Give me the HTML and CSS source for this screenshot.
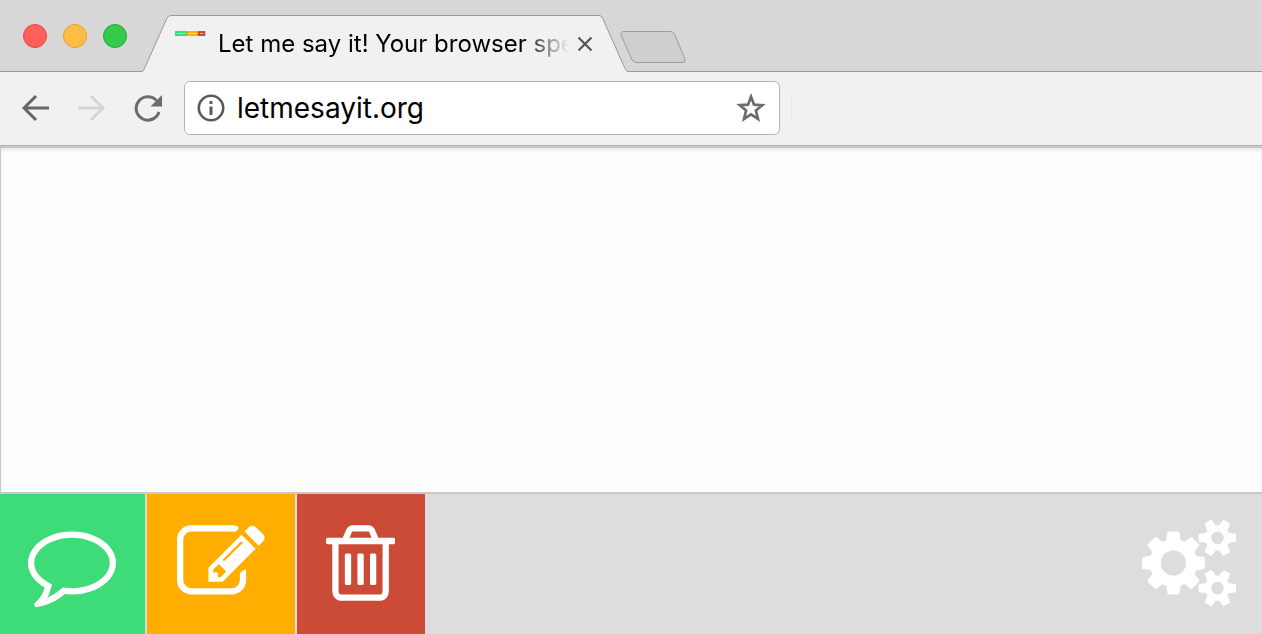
FILE: index.html
```html
<!DOCTYPE html>
<html lang="en">
<head>
<meta charset="utf-8">
<title>Let me say it!</title>
<link rel="stylesheet" href="styles.css">
</head>
<body>
<header class="tabstrip">
  <div class="lights">
    <button class="light red" type="button" aria-label="Close window"></button>
    <button class="light amber" type="button" aria-label="Minimize window"></button>
    <button class="light green" type="button" aria-label="Zoom window"></button>
  </div>
  <div class="tab">
    <svg class="tab-shape" viewBox="0 0 486 57" aria-hidden="true">
      <path d="M0 57L1.500 55.500L25 3Q26.500.500 29 .500H457Q459.500.500 460.500 3L484 55Q485 57 486 57Z" fill="#f1f1f1"/>
      <path d="M0 56.500Q1.500 56 2.500 53.500L25 3Q26.500.500 29 .500H457Q459.500.500 460.500 3L483 53.500Q484.500 56.500 486 56.500" fill="none" stroke="#989898"/>
    </svg>
    <svg class="favicon" viewBox="0 0 31 5" aria-hidden="true">
      <path fill="#3ddc78" d="M0 0h12v5H0z"/><path fill="#ffae00" d="M12 0h11v5H12z"/><path fill="#cc4b37" d="M23 0h7v5h-7z"/><path fill="#ccc" d="M30 0h1v5h-1z"/>
      <path stroke="#fff" stroke-opacity=".6" d="M2 2.500h8M14 2.500h7M25 2.500h3"/>
    </svg>
    <span class="tab-title">Let me say it! Your browser spe</span>
    <button class="tab-close" type="button" aria-label="Close tab">
      <svg viewBox="0 0 16 16"><path d="M1.500 1.500l13 13M14.500 1.500l-13 13" fill="none" stroke="#555" stroke-width="2.200"/></svg>
    </button>
  </div>
  <button class="new-tab" type="button" aria-label="New tab">
    <svg viewBox="0 0 66 32"><path d="M4 .500H50Q53 .500 54.500 3L65 28Q66 31.500 63 31.500H17Q13.500 31.500 12 29L1 4Q0 .500 4 .500Z" fill="#cfcfcf" stroke="#9b9b9b"/></svg>
  </button>
</header>
<nav class="toolbar">
  <button class="nav" type="button" aria-label="Back">
    <svg viewBox="0 0 28 28"><path d="M27 14H2M14 2L2 14l12 12" fill="none" stroke="#666" stroke-width="3"/></svg>
  </button>
  <button class="nav" type="button" aria-label="Forward" disabled>
    <svg viewBox="0 0 28 28"><path d="M0 14h25M13 2l12 12-12 12" fill="none" stroke="#d6d6d6" stroke-width="3"/></svg>
  </button>
  <button class="nav" type="button" aria-label="Reload">
    <svg viewBox="0 0 28 28"><path d="M22.500 6.500A11.700 11.700 0 1 0 25 18" fill="none" stroke="#6b6b6b" stroke-width="3"/><path d="M28 1v11.500H16.500z" fill="#6b6b6b"/></svg>
  </button>
  <form class="address">
    <svg class="info" viewBox="0 0 28 28" aria-hidden="true"><circle cx="14" cy="14" r="12.200" fill="none" stroke="#5a5a5a" stroke-width="2.600"/><path d="M12.500 7h3v3h-3zM12.500 12.500h3V21h-3z" fill="#5a5a5a"/></svg>
    <input class="url" type="text" aria-label="Address" value="letmesayit.org">
    <button class="star" type="button" aria-label="Bookmark">
      <svg viewBox="0 0 30 30"><path d="M15 3.800L18 11.700L26.200 12.200L19.900 17.500L22 25.900L15 21.400L8 25.900L10.100 17.500L3.800 12.200L12 11.700Z" fill="none" stroke="#6b6b6b" stroke-width="2.700"/></svg>
    </button>
  </form>
  <span class="divider"></span>
</nav>
<main class="page">
  <textarea class="speech" aria-label="Text to say"></textarea>
  <div class="actions">
    <button class="action say" type="button" aria-label="Say it">
      <svg viewBox="0 0 1792 1792"><path d="M896 384q-204 0-381.500 69.500t-282 187.500-104.500 255q0 112 71.500 213.500t201.500 175.500l87 50-27 96q-24 91-70 172 152-63 275-171l43-38 57 6q69 8 130 8 204 0 381.500-69.500t282-187.500 104.500-255-104.500-255-282-187.500-381.500-69.500zm896 512q0 174-120 321.500t-326 233-450 85.500q-70 0-145-8-198 175-460 242-49 14-114 22h-5q-15 0-27-10.500t-16-27.500v-1q-3-4-.5-12t2-10 4.500-9.500l6-9 7-8.500 8-9q7-8 31-34.500t34.500-38 31-39.500 32.500-51 27-59 26-76q-157-89-247.500-220t-90.500-281q0-174 120-321.500t326-233 450-85.500 450 85.500 326 233 120 321.500z"/></svg>
    </button>
    <button class="action edit" type="button" aria-label="Edit">
      <svg viewBox="0 0 1792 1792"><path d="M888 1184l116-116-152-152-116 116v56h96v96h56zm440-720q-16-16-33 1l-350 350q-17 17-1 33t33-1l350-350q17-17 1-33zm80 594v190q0 119-84.500 203.500t-203.500 84.500h-832q-119 0-203.500-84.500t-84.500-203.500v-832q0-119 84.500-203.500t203.500-84.500h832q63 0 117 25 15 7 18 23 3 17-9 29l-49 49q-14 14-32 8-23-6-45-6h-832q-66 0-113 47t-47 113v832q0 66 47 113t113 47h832q66 0 113-47t47-113v-126q0-13 9-22l64-64q15-15 35-7t20 29zm-96-738l288 288-672 672h-288v-288zm444 132l-92 92-288-288 92-92q28-28 68-28t68 28l152 152q28 28 28 68t-28 68z"/></svg>
    </button>
    <button class="action clear" type="button" aria-label="Clear">
      <svg viewBox="192 0 1408 1792"><path d="M704 736v576q0 14-9 23t-23 9h-64q-14 0-23-9t-9-23v-576q0-14 9-23t23-9h64q14 0 23 9t9 23zm256 0v576q0 14-9 23t-23 9h-64q-14 0-23-9t-9-23v-576q0-14 9-23t23-9h64q14 0 23 9t9 23zm256 0v576q0 14-9 23t-23 9h-64q-14 0-23-9t-9-23v-576q0-14 9-23t23-9h64q14 0 23 9t9 23zm128 724v-948h-896v948q0 22 7 40.500t14.500 27 10.500 8.500h832q3 0 10.500-8.500t14.500-27 7-40.500zm-672-1076h448l-48-117q-7-9-17-11h-317q-10 2-17 11zm928 32v64q0 14-9 23t-23 9h-96v948q0 83-47 143.500t-113 60.500h-832q-66 0-113-58.500t-47-141.500v-952h-96q-14 0-23-9t-9-23v-64q0-14 9-23t23-9h309l70-167q15-37 54-63t79-26h320q40 0 79 26t54 63l70 167h309q14 0 23 9t9 23z"/></svg>
    </button>
    <button class="settings" type="button" aria-label="Settings">
      <svg viewBox="0 0 1920 1792"><path d="M896 896q0-106-75-181t-181-75-181 75-75 181 75 181 181 75 181-75 75-181zm768 512q0-52-38-90t-90-38-90 38-38 90q0 53 37.500 90.500t90.500 37.500 90.500-37.500 37.500-90.500zm0-1024q0-52-38-90t-90-38-90 38-38 90q0 53 37.500 90.500t90.500 37.500 90.500-37.500 37.500-90.500zm-384 421v185q0 10-7 19.500t-16 10.500l-155 24q-11 35-32 76 34 48 90 115 7 11 7 20 0 12-7 19-23 30-82.500 89.500t-78.500 59.500q-11 0-21-7l-115-90q-37 19-77 31-11 108-23 155-7 24-30 24h-186q-11 0-20-7.500t-10-17.500l-23-153q-34-10-75-31l-118 89q-7 7-20 7-11 0-21-8-144-133-144-160 0-9 7-19 10-14 41-53t47-61q-23-44-35-82l-152-24q-10-1-17-9.500t-7-19.500v-185q0-10 7-19.500t16-10.500l155-24q11-35 32-76-34-48-90-115-7-11-7-20 0-12 7-20 22-30 82-89t79-59q11 0 21 7l115 90q34-18 77-32 11-108 23-154 7-24 30-24h186q11 0 20 7.500t10 17.500l23 153q34 10 75 31l118-89q8-7 20-7 11 0 21 8 144 133 144 160 0 8-7 19-12 16-42 54t-45 60q23 48 34 82l152 23q10 2 17 10.500t7 19.500zm640 533v140q0 16-149 31-12 27-30 52 51 113 51 138 0 4-4 7-122 71-124 71-8 0-46-47t-52-68q-20 2-30 2t-30-2q-14 21-52 68t-46 47q-2 0-124-71-4-3-4-7 0-25 51-138-18-25-30-52-149-15-149-31v-140q0-16 149-31 13-29 30-52-51-113-51-138 0-4 4-7 4-2 35-20t59-34 30-16q8 0 46 46.500t52 67.500q20-2 30-2t30 2q51-71 92-112l6-2q4 0 124 70 4 3 4 7 0 25-51 138 17 23 30 52 149 15 149 31zm0-1024v140q0 16-149 31-12 27-30 52 51 113 51 138 0 4-4 7-122 71-124 71-8 0-46-47t-52-68q-20 2-30 2t-30-2q-14 21-52 68t-46 47q-2 0-124-71-4-3-4-7 0-25 51-138-18-25-30-52-149-15-149-31v-140q0-16 149-31 13-29 30-52-51-113-51-138 0-4 4-7 4-2 35-20t59-34 30-16q8 0 46 46.500t52 67.500q20-2 30-2t30 2q51-71 92-112l6-2q4 0 124 70 4 3 4 7 0 25-51 138 17 23 30 52 149 15 149 31z"/></svg>
    </button>
  </div>
</main>
</body>
</html>
```
FILE: styles.css
```css
* {
  box-sizing: border-box;
}

body {
  margin: 0;
  min-height: 100vh;
  display: flex;
  flex-direction: column;
  background: #f1f1f1;
  color: #000;
  font-family: Inter, Roboto, "Liberation Sans", sans-serif;
}

button {
  margin: 0;
  padding: 0;
  border: 0;
  background: none;
}

svg {
  display: block;
}

.tabstrip {
  display: flex;
  height: 72px;
  padding-left: 23px;
  background: #d7d7d7;
  box-shadow: inset 0 -1px #989898;
}

.lights {
  display: flex;
  gap: 16px;
  width: 119px;
  padding-top: 24px;
}

.light {
  width: 24px;
  height: 24px;
  border: 1px solid;
  border-radius: 50%;
}

.red {
  background: #ff605c;
  border-color: #e2463f;
}

.amber {
  background: #ffbd44;
  border-color: #e0a033;
}

.green {
  background: #34cb4b;
  border-color: #1fa835;
}

.tab {
  position: relative;
  display: flex;
  align-items: center;
  width: 486px;
  margin-top: 15px;
  padding: 0 35px 0 33px;
}

.tab-shape {
  position: absolute;
  inset: 0;
  width: 100%;
  height: 100%;
}

.favicon {
  position: relative;
  width: 31px;
  height: 5px;
  margin-bottom: 21px;
}

.tab-title {
  position: relative;
  flex: 1;
  min-width: 0;
  margin: 0 8px 0 12px;
  overflow: hidden;
  white-space: nowrap;
  font-size: 24px;
  line-height: 32px;
  -webkit-mask-image: linear-gradient(to left, transparent, #000 48px);
  mask-image: linear-gradient(to left, transparent, #000 48px);
}

.tab-close {
  position: relative;
  width: 16px;
  height: 16px;
}

.new-tab {
  width: 66px;
  height: 32px;
  margin: 31px 0 0 -8px;
}

.toolbar {
  display: flex;
  align-items: center;
  height: 73px;
  padding: 0 21px 2px 22px;
  background: #f1f1f1;
}

.nav {
  width: 28px;
  height: 28px;
  margin-right: 28px;
}

.address {
  display: flex;
  align-items: center;
  flex: 0 1 596px;
  height: 54px;
  margin-left: -6px;
  padding: 0 13px 0 12px;
  border: 1px solid #b4b4b4;
  border-radius: 6px;
  background: #fff;
}

.info {
  flex: none;
  width: 28px;
  height: 28px;
}

.url {
  flex: 1;
  min-width: 0;
  height: 40px;
  margin-left: 12px;
  padding: 0;
  border: 0;
  outline: 0;
  background: none;
  color: #000;
  font: 28px Inter, Roboto, "Liberation Sans", sans-serif;
}

.star {
  width: 30px;
  height: 30px;
}

.divider {
  width: 1px;
  height: 24px;
  margin-left: 11px;
  background: #e8e8e8;
}

.page {
  flex: 1;
  display: flex;
  flex-direction: column;
  border-top: 1px solid #b3b3b3;
  background: #ddd;
}

.speech {
  flex: 1;
  width: 100%;
  resize: none;
  outline: 0;
  border: solid #c9c9c9;
  border-width: 2px 0 2px 1px;
  border-radius: 0;
  background: #fefefe;
  box-shadow: inset 0 3px 4px -1px #e4e4e4;
  padding: 12px;
  font: 28px Inter, Roboto, sans-serif;
}

.actions {
  display: flex;
  gap: 2px;
  height: 140px;
}

.action {
  padding: 0 29px 3px;
  fill: #fff;
}

.action svg,
.settings svg {
  height: 88px;
}

.say {
  padding-left: 28px;
  background: #3ddc78;
}

.edit {
  padding: 0 30px 3px;
  background: #ffae00;
}

.clear {
  padding-right: 30px;
  background: #cc4b37;
}

.settings {
  margin-left: auto;
  padding: 0 26px 3px;
  fill: #fff;
}
```
